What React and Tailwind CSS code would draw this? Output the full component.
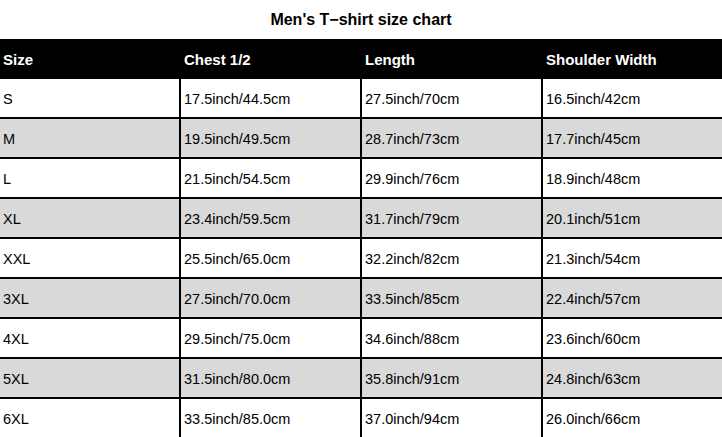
import React from "react";

const rows = [
  ["S", "17.5inch/44.5cm", "27.5inch/70cm", "16.5inch/42cm"],
  ["M", "19.5inch/49.5cm", "28.7inch/73cm", "17.7inch/45cm"],
  ["L", "21.5inch/54.5cm", "29.9inch/76cm", "18.9inch/48cm"],
  ["XL", "23.4inch/59.5cm", "31.7inch/79cm", "20.1inch/51cm"],
  ["XXL", "25.5inch/65.0cm", "32.2inch/82cm", "21.3inch/54cm"],
  ["3XL", "27.5inch/70.0cm", "33.5inch/85cm", "22.4inch/57cm"],
  ["4XL", "29.5inch/75.0cm", "34.6inch/88cm", "23.6inch/60cm"],
  ["5XL", "31.5inch/80.0cm", "35.8inch/91cm", "24.8inch/63cm"],
  ["6XL", "33.5inch/85.0cm", "37.0inch/94cm", "26.0inch/66cm"],
];

const headers = ["Size", "Chest 1/2", "Length", "Shoulder Width"];

export default function App() {
  return (
    <div
      className="w-[722px] h-[437px] overflow-hidden bg-white text-black"
      style={{ fontFamily: '"Liberation Sans", Arial, sans-serif' }}
    >
      <div className="h-[39px] flex items-center justify-center pt-[1px] text-[16px] font-bold">
        Men's T−shirt size chart
      </div>
      <div className="h-10 bg-black text-white grid grid-cols-[181px_181px_181px_179px] text-[15px] font-bold">
        {headers.map((h, i) => (
          <div key={i} className="flex items-center pl-[3px] pt-[2px]">
            {h}
          </div>
        ))}
      </div>
      {rows.map((r, ri) => (
        <div
          key={ri}
          className={`h-10 grid grid-cols-[181px_181px_181px_179px] border-b-2 border-black text-[14.5px] ${
            ri % 2 === 1 ? "bg-[#d9d9d9]" : "bg-white"
          }`}
        >
          {r.map((c, ci) => (
            <div
              key={ci}
              className={`flex items-center pl-[3px] pt-[3px] ${ci < 3 ? "border-r-2 border-black" : ""}`}
            >
              {c}
            </div>
          ))}
        </div>
      ))}
    </div>
  );
}
